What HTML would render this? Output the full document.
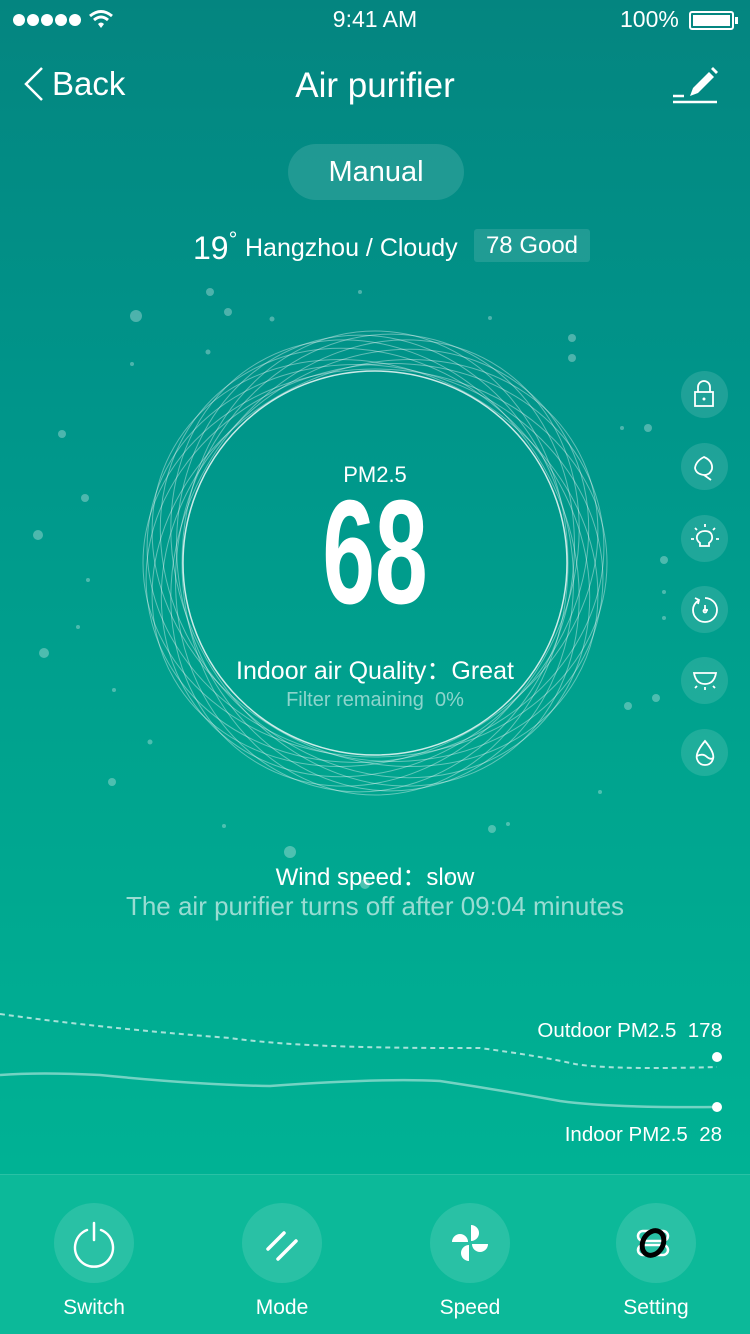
<!DOCTYPE html>
<html><head><meta charset="utf-8"><style>
*{margin:0;padding:0;box-sizing:border-box}
body{width:750px;height:1334px;overflow:hidden;font-family:"Liberation Sans",sans-serif;color:#fff;position:relative;background:linear-gradient(180deg,#048580 0%,#00958a 30%,#00a58f 60%,#00b294 88%)}
.a{position:absolute}
.c{position:absolute;text-align:center}
.side{position:absolute;left:681px;width:47px;height:47px;border-radius:50%;background:rgba(255,255,255,0.12)}
.side svg{position:absolute;left:0;top:0}
.nav{position:absolute;left:0;top:1174px;width:750px;height:160px;background:#0cb999;border-top:1px solid rgba(255,255,255,0.12)}
.btn{position:absolute;top:28px;width:80px;height:80px;border-radius:50%;background:rgba(255,255,255,0.12)}
.lbl{position:absolute;top:121px;width:160px;text-align:center;font-size:21px}
</style></head><body>
<svg class="a" style="left:12px;top:12px" width="72" height="16" fill="#fff"><circle cx="7" cy="8" r="6"/><circle cx="21" cy="8" r="6"/><circle cx="35" cy="8" r="6"/><circle cx="49" cy="8" r="6"/><circle cx="63" cy="8" r="6"/></svg>
<svg class="a" style="left:88px;top:9px" width="26" height="20" viewBox="0 0 26 20"><path d="M2 7 Q13 -2 24 7" stroke="#fff" stroke-width="3" fill="none"/><path d="M6 11 Q13 5 20 11" stroke="#fff" stroke-width="3" fill="none"/><path d="M10 15 L13 19 L16 15 Q13 12 10 15Z" fill="#fff"/></svg>
<div class="c" style="left:0;width:750px;top:6px;font-size:23px">9:41 AM</div>
<div class="a" style="left:620px;top:6px;font-size:23px">100%</div>
<div class="a" style="left:689px;top:11px;width:45px;height:19px;border:2px solid #fff;border-radius:3px;padding:2px"><div style="width:100%;height:100%;background:#fff"></div></div>
<div class="a" style="left:735px;top:17px;width:3px;height:7px;background:#fff"></div>
<svg class="a" style="left:22px;top:66px" width="24" height="36"><path d="M20 2 L4 18 L20 34" stroke="#fff" stroke-width="2.5" fill="none"/></svg>
<div class="a" style="left:52px;top:65px;font-size:33px">Back</div>
<div class="c" style="left:0;width:750px;top:66px;font-size:35px">Air purifier</div>
<svg class="a" style="left:670px;top:64px" width="50" height="40"><path d="M3 32 H14" stroke="#fff" stroke-width="2.5"/><path d="M3 38 H47" stroke="#fff" stroke-width="2.5"/><path d="M20 32 L23 24 L39 8 L44 13 L28 29Z" fill="#fff"/><path d="M41 5 L43 3 L48 8 L46 10Z" fill="#fff"/></svg>
<div class="c" style="left:288px;top:144px;width:176px;height:56px;border-radius:28px;background:rgba(255,255,255,0.12);font-size:29px;line-height:56px">Manual</div>
<div class="a" style="left:193px;top:227px;font-size:32px">19<span style="font-size:22px;vertical-align:12px">°</span></div>
<div class="a" style="left:245px;top:234px;font-size:25px">Hangzhou / Cloudy</div>
<div class="a" style="left:474px;top:229px;width:116px;height:33px;background:rgba(255,255,255,0.12);border-radius:3px;font-size:24px;text-align:center;line-height:33px">78 Good</div>
<svg class="a" style="left:0;top:0" width="750" height="1000">
<g fill="rgba(255,255,255,0.3)">
<circle cx="210" cy="292" r="4"/><circle cx="136" cy="316" r="6"/><circle cx="228" cy="312" r="4"/><circle cx="272" cy="319" r="2.5"/><circle cx="360" cy="292" r="2"/><circle cx="572" cy="338" r="4"/><circle cx="572" cy="358" r="4"/><circle cx="490" cy="318" r="2"/><circle cx="208" cy="352" r="2.5"/><circle cx="132" cy="364" r="2"/><circle cx="62" cy="434" r="4"/><circle cx="85" cy="498" r="4"/><circle cx="38" cy="535" r="5"/><circle cx="88" cy="580" r="2"/><circle cx="78" cy="627" r="2"/><circle cx="44" cy="653" r="5"/><circle cx="114" cy="690" r="2"/><circle cx="150" cy="742" r="2.5"/><circle cx="112" cy="782" r="4"/><circle cx="224" cy="826" r="2"/><circle cx="290" cy="852" r="6"/><circle cx="492" cy="829" r="4"/><circle cx="508" cy="824" r="2"/><circle cx="365" cy="884" r="5"/><circle cx="448" cy="876" r="3"/><circle cx="622" cy="428" r="2"/><circle cx="648" cy="428" r="4"/><circle cx="664" cy="560" r="4"/><circle cx="664" cy="592" r="2"/><circle cx="656" cy="698" r="4"/><circle cx="628" cy="706" r="4"/><circle cx="600" cy="792" r="2"/><circle cx="664" cy="618" r="2"/>
</g>
<g fill="none" stroke="rgba(255,255,255,0.38)" stroke-width="1" transform="translate(375 563)">
<ellipse rx="232" ry="194" transform="rotate(0)"/>
<ellipse rx="230" ry="196" transform="rotate(15)"/>
<ellipse rx="232" ry="193" transform="rotate(30)"/>
<ellipse rx="231" ry="197" transform="rotate(45)"/>
<ellipse rx="232" ry="194" transform="rotate(60)"/>
<ellipse rx="230" ry="196" transform="rotate(75)"/>
<ellipse rx="232" ry="193" transform="rotate(90)"/>
<ellipse rx="231" ry="197" transform="rotate(105)"/>
<ellipse rx="232" ry="194" transform="rotate(120)"/>
<ellipse rx="230" ry="196" transform="rotate(135)"/>
<ellipse rx="232" ry="193" transform="rotate(150)"/>
<ellipse rx="231" ry="197" transform="rotate(165)"/>
<circle r="192" stroke="rgba(255,255,255,0.8)" stroke-width="1.5"/>
</g>
</svg>
<div class="c" style="left:0;width:750px;top:462px;font-size:22px">PM2.5</div>
<div class="c" style="left:0;width:750px;top:478px;font-size:148px;font-weight:bold;line-height:150px;transform:scaleX(0.64)">68</div>
<div class="c" style="left:0;width:750px;top:651px;font-size:25px">Indoor air Quality：Great</div>
<div class="c" style="left:0;width:750px;top:689px;font-size:20px;color:rgba(255,255,255,0.55)">Filter remaining &nbsp;0%</div>
<div class="c" style="left:0;width:750px;top:857px;font-size:24px">Wind speed：slow</div>
<div class="c" style="left:0;width:750px;top:891px;font-size:26px;color:rgba(255,255,255,0.6)">The air purifier turns off after 09:04 minutes</div>
<div class="side" style="top:371px"><svg width="47" height="47"><rect x="14" y="21" width="18" height="14" fill="none" stroke="#fff" stroke-width="1.8"/><path d="M17 21 V16 a6 6 0 0 1 12 0 V21" fill="none" stroke="#fff" stroke-width="1.8"/><circle cx="23" cy="28" r="1.5" fill="#fff"/></svg></div>
<div class="side" style="top:443px"><svg width="47" height="47"><path d="M23 14 Q32 18 31 26 Q29 32 23 32 Q15 31 14 25 Q15 18 23 14Z M23 32 L30 37" fill="none" stroke="#fff" stroke-width="1.8"/></svg></div>
<div class="side" style="top:515px"><svg width="47" height="47" fill="none" stroke="#fff" stroke-width="1.8"><path d="M19 31 V28 Q15 25 16 21 Q18 16 24 16 Q30 16 31 21 Q32 25 28 28 V31Z"/><path d="M24 9 V12 M14 13 L16 15 M34 13 L32 15 M10 24 H13 M35 24 H38"/></svg></div>
<div class="side" style="top:586px"><svg width="47" height="47" fill="none" stroke="#fff" stroke-width="1.8"><path d="M18 14 Q12 18 12 24 A12 12 0 1 0 24 12"/><path d="M14 12 L18 14 L17 18"/><path d="M24 19 V24 H27"/><circle cx="24" cy="25" r="1.5"/></svg></div>
<div class="side" style="top:657px"><svg width="47" height="47" fill="none" stroke="#fff" stroke-width="1.8"><path d="M13 16 H35 Q33 27 24 27 Q15 27 13 16Z"/><path d="M24 30 V33 M16 29 L14 31 M32 29 L34 31"/></svg></div>
<div class="side" style="top:729px"><svg width="47" height="47" fill="none" stroke="#fff" stroke-width="1.8"><path d="M24 12 Q14 24 16 30 Q18 36 24 36 Q30 36 32 30 Q34 24 24 12Z"/><path d="M16 27 Q22 24 26 28 Q30 31 32 29"/></svg></div>
<svg class="a" style="left:0;top:990px" width="750" height="180">
<path d="M0 24 Q100 38 230 48 Q300 58 450 58 Q470 58 480 58 Q540 66 575 74 Q610 80 717 77" fill="none" stroke="rgba(255,255,255,0.65)" stroke-width="2" stroke-dasharray="5 4"/>
<path d="M0 85 Q40 82 100 85 Q200 95 270 96 Q380 88 440 91 Q500 100 560 111 Q610 118 717 117" fill="none" stroke="rgba(255,255,255,0.45)" stroke-width="2.5"/>
<circle cx="717" cy="67" r="5" fill="#fff"/><circle cx="717" cy="117" r="5" fill="#fff"/>
</svg>
<div class="a" style="right:28px;top:1019px;font-size:20.5px">Outdoor PM2.5 &nbsp;178</div>
<div class="a" style="right:28px;top:1123px;font-size:20.5px">Indoor PM2.5 &nbsp;28</div>
<div class="nav">
<div class="btn" style="left:54px"><svg width="80" height="80" fill="none" stroke="#fff" stroke-width="2.5" stroke-linecap="round"><path d="M33 27 A19 19 0 1 0 47 27"/><path d="M40 20 V37"/></svg></div>
<div class="lbl" style="left:14px">Switch</div>
<div class="btn" style="left:242px"><svg width="80" height="80" stroke="#fff" stroke-width="3.5" stroke-linecap="round"><path d="M26 46 L42 30 M36 56 L54 38"/></svg></div>
<div class="lbl" style="left:202px">Mode</div>
<div class="btn" style="left:430px"><svg width="80" height="80" fill="#fff"><path d="M41 22 V38 A8 8 0 0 0 41 22Z"/><path d="M22 39 H38 A8 8 0 0 0 22 39Z"/><path d="M39 42 V58 A8 8 0 0 1 39 42Z"/><path d="M42 41 H58 A8 8 0 0 1 42 41Z"/></svg></div>
<div class="lbl" style="left:390px">Speed</div>
<div class="btn" style="left:616px"><svg width="80" height="80"><rect x="22" y="28" width="30" height="10" rx="5" fill="none" stroke="#fff" stroke-width="2.5"/><rect x="22" y="42" width="30" height="10" rx="5" fill="none" stroke="#fff" stroke-width="2.5"/><ellipse cx="37" cy="40" rx="10" ry="13" transform="rotate(30 37 40)" fill="none" stroke="#000" stroke-width="5"/></svg></div>
<div class="lbl" style="left:576px">Setting</div>
</div>
</body></html>
